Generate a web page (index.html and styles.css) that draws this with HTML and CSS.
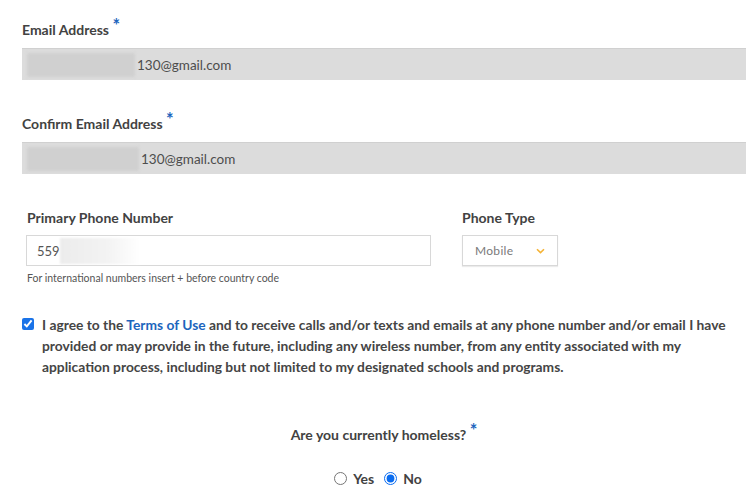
FILE: index.html
```html
<!DOCTYPE html>
<html lang="en">
<head>
  <meta charset="UTF-8">
  <meta name="viewport" content="width=device-width, initial-scale=1.0">
  <title>Contact Information</title>
  <link rel="stylesheet" href="styles.css">
</head>
<body>
  <form class="form-container" id="contact-form">
    <div class="group">
      <label class="label" for="email">Email Address <span class="req">*</span></label>
      <div class="readonly" id="email"><span class="mask"></span>130@gmail.com</div>
    </div>

    <div class="group">
      <label class="label" for="confirm-email">Confirm Email Address <span class="req">*</span></label>
      <div class="readonly" id="confirm-email"><span class="mask mask-wide"></span>130@gmail.com</div>
    </div>

    <div class="phone-row">
      <div class="phone-col">
        <label class="label" for="phone">Primary Phone Number</label>
        <div class="text-input" id="phone">559<span class="mask-light"></span></div>
        <div class="hint">For international numbers insert + before country code</div>
      </div>
      <div class="type-col">
        <label class="label" for="phone-type">Phone Type</label>
        <div class="select" id="phone-type">
          <span>Mobile</span>
          <svg class="chevron" width="9" height="6" viewBox="0 0 9 6"><path d="M1 1.2 L4.5 4.6 L8 1.2" fill="none" stroke="#f5b335" stroke-width="1.6"/></svg>
        </div>
      </div>
    </div>

    <div class="agree">
      <input type="checkbox" id="agree" checked>
      <label for="agree">I agree to the <a href="#">Terms of Use</a> and to receive calls and/or texts and emails at any phone number and/or email I have<br>provided or may provide in the future, including any wireless number, from any entity associated with my<br>application process, including but not limited to my designated schools and programs.</label>
    </div>

    <div class="question">
      <div class="question-title">Are you currently homeless? <span class="req">*</span></div>
      <div class="options">
        <label class="option"><input type="radio" name="homeless" value="yes"> Yes</label>
        <label class="option"><input type="radio" name="homeless" value="no" checked> No</label>
      </div>
    </div>
  </form>
</body>
</html>
```

FILE: styles.css
```css
body {
  font-family: Lato, "Open Sans", sans-serif;
  background-color: #fff;
  color: #454545;
  margin: 0;
  padding: 0;
}
.form-container {
  width: 724px;
  padding: 20px 0 0 22px;
}
.group {
  margin-bottom: 34px;
}
.label {
  display: block;
  font-weight: bold;
  font-size: 14px;
  line-height: 20px;
  color: #424242;
  margin-bottom: 8px;
}
.req {
  color: #1c65bd;
  font-size: 18px;
  line-height: 0;
  position: relative;
  top: -3px;
}
.readonly {
  display: flex;
  align-items: center;
  height: 31px;
  background-color: #dcdcdc;
  border-top: 1px solid #d0d0d0;
  font-size: 13.5px;
  color: #4d4d4d;
}
.mask {
  width: 108px;
  height: 24px;
  margin: 0 2px 0 5px;
  background-color: #d0d0d0;
  filter: blur(1.5px);
}
.mask-wide {
  width: 112px;
}
.phone-row {
  display: flex;
}
.phone-row .label {
  margin-bottom: 7px;
}
.phone-col {
  width: 405px;
  padding-left: 4px;
}
.phone-col .label {
  padding-left: 1px;
}
.type-col {
  margin-left: 31px;
}
.text-input {
  display: flex;
  align-items: center;
  height: 29px;
  border: 1px solid #d8d8d8;
  padding-left: 10px;
  font-size: 13px;
  color: #555;
}
.mask-light {
  width: 80px;
  height: 26px;
  background: linear-gradient(to right, #ececec, #f3f3f3 60%, #fff);
  filter: blur(1px);
}
.hint {
  font-size: 10.5px;
  color: #555;
  margin-top: 6px;
  padding-left: 1px;
}
.select {
  display: flex;
  align-items: center;
  justify-content: space-between;
  width: 70px;
  height: 29px;
  padding: 0 12px;
  border: 1px solid #d8d8d8;
  box-shadow: 0 1px 1px rgba(0, 0, 0, 0.08);
  font-size: 12px;
  letter-spacing: 0.3px;
  color: #7a7a7a;
}
.agree {
  display: flex;
  align-items: flex-start;
  margin-top: 30px;
}
.agree input {
  width: 12px;
  height: 12px;
  margin: 4px 8px 0 0;
  accent-color: #1a73e8;
}
.agree label {
  font-weight: bold;
  font-size: 13.8px;
  line-height: 21px;
  color: #454545;
}
.agree a {
  color: #1c65bd;
  text-decoration: none;
}
.question {
  text-align: center;
  margin-top: 49px;
}
.question-title {
  font-weight: bold;
  font-size: 14px;
  color: #424242;
}
.options {
  display: flex;
  justify-content: center;
  gap: 10px;
  margin-top: 27px;
  padding-right: 12px;
}
.option {
  display: flex;
  align-items: center;
  font-weight: bold;
  font-size: 14px;
  color: #424242;
}
.option input {
  margin: 0 6px 0 0;
  accent-color: #0a6cf0;
}
```
